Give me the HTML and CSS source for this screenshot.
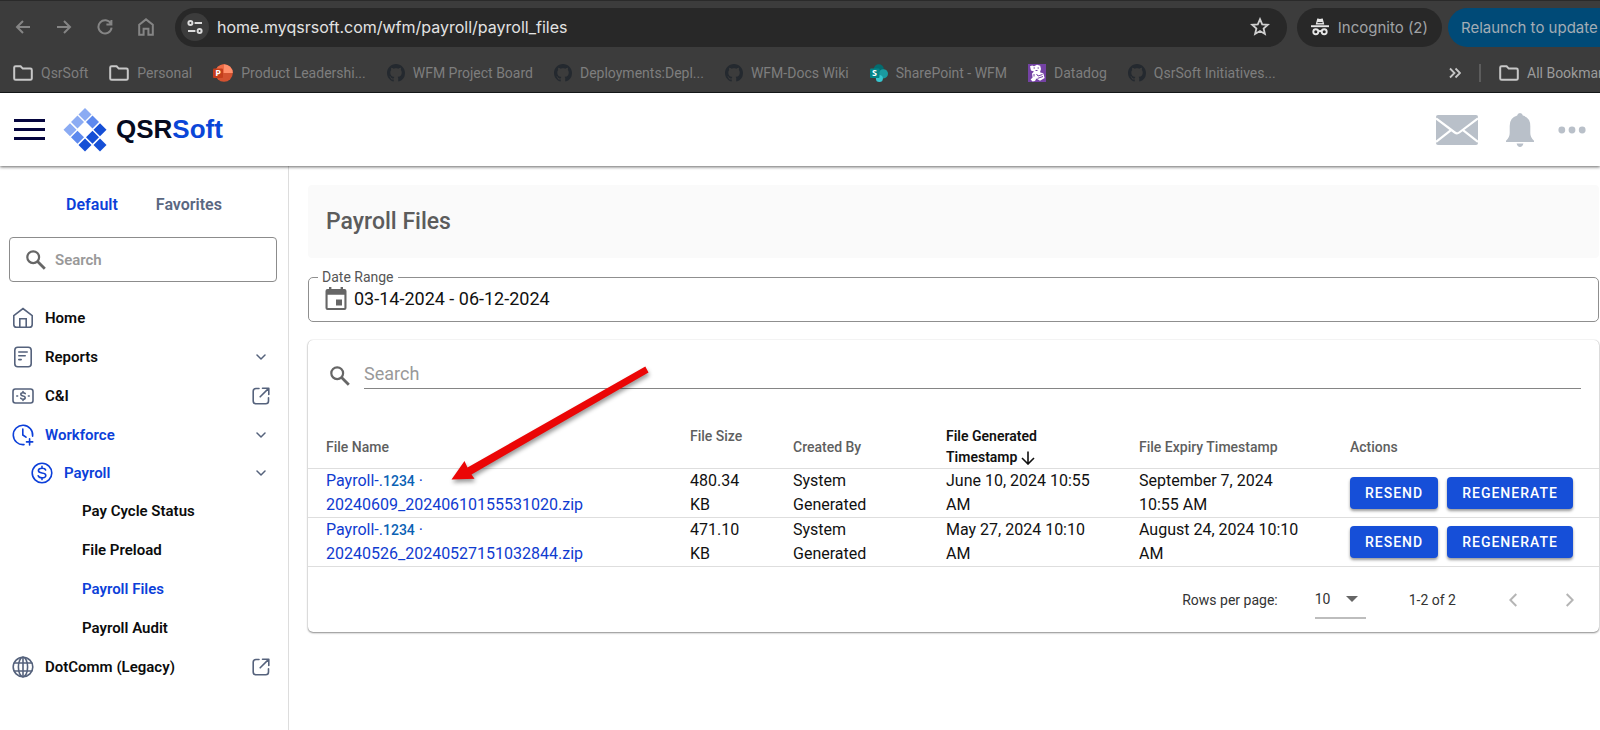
FILE: index.html
```html
<!DOCTYPE html>
<html lang="en">
<head>
<meta charset="utf-8">
<title>Payroll Files</title>
<link rel="stylesheet" href="styles.css">
</head>
<body>
<svg class="defs" aria-hidden="true">
  <symbol id="i-folder" viewBox="0 0 20 16"><path d="M1.2 2.6Q1.2 1.2 2.6 1.2H7.6L9.8 3.6H17.4Q18.8 3.6 18.8 5V13.4Q18.8 14.8 17.4 14.8H2.6Q1.2 14.8 1.2 13.4Z" fill="none" stroke="#c7c7c7" stroke-width="2"/></symbol>
  <symbol id="i-github" viewBox="0 0 16 16"><path fill="#24292f" d="M8 0C3.58 0 0 3.58 0 8c0 3.54 2.29 6.53 5.47 7.59.4.07.55-.17.55-.38 0-.19-.01-.82-.01-1.49-2.01.37-2.53-.49-2.69-.94-.09-.23-.48-.94-.82-1.13-.28-.15-.68-.52-.01-.53.63-.01 1.08.58 1.23.82.72 1.21 1.87.87 2.33.66.07-.52.28-.87.51-1.07-1.78-.2-3.64-.89-3.64-3.95 0-.87.31-1.59.82-2.15-.08-.2-.36-1.02.08-2.12 0 0 .67-.21 2.2.82.64-.18 1.32-.27 2-.27.68 0 1.36.09 2 .27 1.53-1.04 2.2-.82 2.2-.82.44 1.1.16 1.92.08 2.12.51.56.82 1.27.82 2.15 0 3.07-1.87 3.75-3.65 3.95.29.25.54.73.54 1.48 0 1.07-.01 1.93-.01 2.2 0 .21.15.46.55.38A8.013 8.013 0 0016 8c0-4.42-3.58-8-8-8z"/></symbol>
  <symbol id="i-search" viewBox="0 0 20 20"><circle cx="7.2" cy="7.2" r="5.9" fill="none" stroke="currentColor" stroke-width="2.2"/><path d="M11.6 11.6L18.8 18.8" stroke="currentColor" stroke-width="2.8"/></symbol>
  <symbol id="i-down" viewBox="0 0 10 6"><path d="M1 1L5 5L9 1" fill="none" stroke="currentColor" stroke-width="1.5" stroke-linecap="round" stroke-linejoin="round"/></symbol>
  <symbol id="i-external" viewBox="0 0 18 18"><path d="M7 1.5H4Q1.2 1.5 1.2 4.3V14Q1.2 16.8 4 16.8H13.7Q16.5 16.8 16.5 14V10.8M10.5 1.2H16.8V7.5M16.6 1.4L8.2 9.8" fill="none" stroke="currentColor" stroke-width="1.6" stroke-linecap="round" stroke-linejoin="round"/></symbol>
</svg>

<div class="browser">
  <div class="toolbar">
    <div class="nav-buttons">
      <button type="button" aria-label="Back"><svg width="16" height="14" viewBox="0 0 16 14"><path d="M15 7H2M8 1L2 7L8 13" /></svg></button>
      <button type="button" aria-label="Forward"><svg width="16" height="14" viewBox="0 0 16 14"><path d="M1 7H14M8 1L14 7L8 13" /></svg></button>
      <button type="button" aria-label="Reload"><svg width="16" height="16" viewBox="0 0 16 16"><path d="M13.8 4.6A6.6 6.6 0 1 0 14.6 8.6M14.4 1V5.6H9.4" /></svg></button>
      <button type="button" aria-label="Home page"><svg width="16" height="18" viewBox="0 0 16 18"><path d="M1.2 6.8L8 1.4L14.8 6.8V16.8H10.4V10.8H5.6V16.8H1.2Z" /></svg></button>
    </div>
    <div class="address">
      <span class="site-info"><svg width="16" height="14" viewBox="0 0 16 14"><g fill="none" stroke="#dcdcdc" stroke-width="2"><circle cx="3.4" cy="3" r="2"/><path d="M7.6 3H15M1 11H8.4"/><circle cx="12.6" cy="11" r="2"/></g></svg></span>
      <input class="url" type="text" aria-label="Address" value="home.myqsrsoft.com/wfm/payroll/payroll_files" readonly>
      <svg width="20" height="20" viewBox="0 0 20 20"><path d="M10 2.2L12.2 7.4L17.8 7.8L13.6 11.5L14.9 17L10 14.1L5.1 17L6.4 11.5L2.2 7.8L7.8 7.4Z" fill="none" stroke="#d0d0d0" stroke-width="1.8"/></svg>
    </div>
    <button type="button" class="incognito"><svg width="18" height="18" viewBox="0 0 18 18"><path fill="#e6e6e6" d="M6.3.5Q7 .2 9 .9Q11 .2 11.7.5L13.3 6.6H4.7Z"/><path d="M0 8.2H18" stroke="#e6e6e6" stroke-width="1.9"/><path d="M6.5 4.6H11.5" stroke="#282828" stroke-width="1"/><g fill="none" stroke="#e6e6e6" stroke-width="1.9"><circle cx="4.8" cy="13.8" r="2.5"/><circle cx="13.2" cy="13.8" r="2.5"/><path d="M7.2 13.4Q9 12.5 10.8 13.4"/></g></svg>Incognito (2)</button>
    <button type="button" class="relaunch">Relaunch to update</button>
  </div>
  <nav class="bookmarks" aria-label="Bookmarks">
    <a href="#"><svg width="20" height="16"><use href="#i-folder"/></svg>QsrSoft</a>
    <a href="#"><svg width="20" height="16"><use href="#i-folder"/></svg>Personal</a>
    <a href="#"><svg width="20" height="18" viewBox="0 0 20 18"><circle cx="11" cy="9" r="8.8" fill="#d35230"/><path d="M11 .2A8.8 8.8 0 0 1 19.8 9H11Z" fill="#ff8f6b"/><path d="M11 .2A8.8 8.8 0 0 0 2.2 9H11Z" fill="#ed6c47"/><rect y="4.5" width="10" height="9.5" rx="1" fill="#c43e1c"/><text x="2.2" y="12.4" class="tile-letter">P</text></svg>Product Leadershi...</a>
    <a href="#"><svg width="18" height="18"><use href="#i-github"/></svg>WFM Project Board</a>
    <a href="#"><svg width="18" height="18"><use href="#i-github"/></svg>Deployments:Depl...</a>
    <a href="#"><svg width="18" height="18"><use href="#i-github"/></svg>WFM-Docs Wiki</a>
    <a href="#"><svg width="18" height="18" viewBox="0 0 18 18"><circle cx="8.8" cy="5.2" r="5" fill="#036c70"/><circle cx="13.4" cy="9.8" r="4.6" fill="#1a9ba1"/><circle cx="9.4" cy="14.4" r="3.5" fill="#37c6d0"/><rect y="4.5" width="9.5" height="9.5" rx="1" fill="#038387"/><text x="2" y="12.4" class="tile-letter">S</text></svg>SharePoint - WFM</a>
    <a href="#"><svg width="18" height="18" viewBox="0 0 18 18"><rect width="18" height="18" fill="#7442a4"/><path fill="#fff" d="M2 2.2L4.2 1.4L6 2.2L9 .8L12.2 1.8L13 5L12 8.2L15.4 9.6L16.6 14L12 16.8L8.4 14.6L7 17L4.6 17.4L2.6 15.4L4.6 13.4L4 9.4L6 7.4L3 6.4Z"/><path d="M5.5 4H7M9.5 4H11M7.5 6.5H9.5M8.5 10L10 12L14.5 10.5M9.5 14.4L15 12.5M6 10V12.5" stroke="#7442a4" stroke-width="1" fill="none"/></svg>Datadog</a>
    <a href="#"><svg width="18" height="18"><use href="#i-github"/></svg>QsrSoft Initiatives...</a>
    <div class="bookmarks-end">
      <button type="button" aria-label="More bookmarks"><svg width="12" height="12" viewBox="0 0 12 12"><path d="M1 1.5L5.5 6L1 10.5M6.5 1.5L11 6L6.5 10.5" fill="none" stroke="#c7c7c7" stroke-width="1.8"/></svg></button>
      <span class="divider"></span>
      <a class="all" href="#"><svg width="20" height="16"><use href="#i-folder"/></svg>All Bookmarks</a>
    </div>
  </nav>
</div>

<header class="app-header">
  <button type="button" class="menu" aria-label="Menu"><span></span><span></span><span></span></button>
  <a class="brand" href="#">
    <svg width="44" height="44" viewBox="0 0 44 44">
      <g fill="#8babf3"><path d="M22 0L28.5 6.5L22 13L15.5 6.5Z"/><path d="M14.5 7.6L21 14.1L14.5 20.6L8 14.1Z"/><path d="M7 15.2L13.5 21.7L7 28.2L.5 21.7Z"/></g>
      <g fill="#5d89ee"><path d="M29.5 7.6L36 14.1L29.5 20.6L23 14.1Z"/><path d="M14.5 22.8L21 29.3L14.5 35.8L8 29.3Z"/></g>
      <g fill="#154fd6"><path d="M37 15.2L43.5 21.7L37 28.2L30.5 21.7Z"/><path d="M29.5 22.8L36 29.3L29.5 35.8L23 29.3Z"/><path d="M22 30.4L28.5 36.9L22 43.4L15.5 36.9Z"/><path d="M37 30.4L43.5 36.9L37 43.4L30.5 36.9Z"/></g>
    </svg>
    <span class="brand-name">QSR<span>Soft</span></span>
  </a>
  <div class="header-actions">
    <button type="button" aria-label="Messages"><svg width="42" height="30" viewBox="0 0 42 30"><rect x="0" y="0" width="42" height="30" rx="2" fill="#b9c0c9"/><path d="M0 3.5L18.8 17.5Q21 19.2 23.2 17.5L42 3.5M0 27L15 15.2M42 27L27 15.2" fill="none" stroke="#fff" stroke-width="2.2"/></svg></button>
    <button type="button" aria-label="Notifications"><svg width="28" height="34" viewBox="0 0 28 34"><path fill="#b9c0c9" d="M14 0Q16.5 0 16.8 2.6Q24.3 4.6 24.3 13V20Q24.3 24.5 28 27.8V29H0V27.8Q3.7 24.5 3.7 20V13Q3.7 4.6 11.2 2.6Q11.5 0 14 0ZM10.6 30.6H17.4Q16.6 34 14 34Q11.4 34 10.6 30.6Z"/></svg></button>
    <button type="button" aria-label="More"><svg width="28" height="8" viewBox="0 0 28 8"><g fill="#b9c0c9"><circle cx="3.8" cy="4" r="3.4"/><circle cx="14" cy="4" r="3.4"/><circle cx="24.2" cy="4" r="3.4"/></g></svg></button>
  </div>
</header>

<div class="layout">
  <aside class="sidebar">
    <div class="tabs"><button type="button" class="active">Default</button><button type="button">Favorites</button></div>
    <label class="side-search"><svg width="20" height="20"><use href="#i-search"/></svg><input type="text" placeholder="Search" aria-label="Search menu"></label>
    <ul class="menu-list">
      <li><a href="#"><svg width="22" height="22" viewBox="0 0 22 22"><path d="M1.8 8.6L11 1.6L20.2 8.6V17.4Q20.2 20.2 17.4 20.2H4.6Q1.8 20.2 1.8 17.4ZM7.8 20V11.8H14.2V20"/></svg>Home</a></li>
      <li><a href="#"><svg width="22" height="22" viewBox="0 0 22 22"><rect x="2.8" y="1.2" width="16.4" height="19.6" rx="3"/><path d="M6.8 6H15.2M6.8 9.8H13.2M6.8 13.6H9.2"/></svg>Reports<svg class="end-down" width="10" height="6"><use href="#i-down"/></svg></a></li>
      <li><a href="#"><svg width="22" height="22" viewBox="0 0 22 22"><rect x="1" y="4" width="20" height="14" rx="2.4"/><path d="M13.2 8.6Q12.6 7.8 11 7.8Q8.8 7.8 8.8 9.3Q8.8 10.7 11 11Q13.2 11.3 13.2 12.7Q13.2 14.2 11 14.2Q9.2 14.2 8.7 13.2M11 6.6V7.8M11 14.2V15.4M4.8 11H5.6M16.4 11H17.2"/></svg>C&amp;I<svg class="end-ext" width="18" height="18"><use href="#i-external"/></svg></a></li>
      <li><a href="#" class="on"><svg width="22" height="22" viewBox="0 0 22 22"><path d="M20.6 12.2A9.7 9.7 0 1 0 12 20.6M10.8 5V11L14 13.2M17.6 14.8V21M14.5 17.9H20.7"/></svg>Workforce<svg class="end-down" width="10" height="6"><use href="#i-down"/></svg></a>
        <ul>
          <li><a href="#" class="on level-2"><svg width="22" height="22" viewBox="0 0 22 22"><circle cx="11" cy="11" r="9.8"/><path d="M14.6 8Q14 6.2 11 6.2Q7.4 6.2 7.4 8.6Q7.4 10.6 11 11Q14.8 11.4 14.8 13.5Q14.8 15.8 11 15.8Q7.8 15.8 7.2 13.8M11 4.4V6.2M11 15.8V17.6"/></svg>Payroll<svg class="end-down" width="10" height="6"><use href="#i-down"/></svg></a>
            <ul class="pages-list">
              <li><a href="#" class="level-3">Pay Cycle Status</a></li>
              <li><a href="#" class="level-3">File Preload</a></li>
              <li><a href="#" class="on level-3">Payroll Files</a></li>
              <li><a href="#" class="level-3">Payroll Audit</a></li>
            </ul>
          </li>
        </ul>
      </li>
      <li><a href="#"><svg width="22" height="22" viewBox="0 0 22 22"><circle cx="11" cy="11" r="9.8"/><ellipse cx="11" cy="11" rx="4.6" ry="9.8"/><path d="M11 1.2V20.8M2.4 7H19.6M2.4 15H19.6"/></svg>DotComm (Legacy)<svg class="end-ext" width="18" height="18"><use href="#i-external"/></svg></a></li>
    </ul>
  </aside>

  <main class="content">
    <h1 class="page-title">Payroll Files</h1>
    <fieldset class="date-range">
      <legend><label for="range">Date Range</label></legend>
      <svg width="22" height="24" viewBox="0 0 22 24"><path fill="#666" fill-rule="evenodd" d="M4 0H6.4V2H15.6V0H18V2H19.5Q21.5 2 21.5 4V21Q21.5 23 19.5 23H2.5Q.5 23 .5 21V4Q.5 2 2.5 2H4ZM2.6 7.8V21H19.4V7.8ZM11 12.5H17V18.5H11Z"/></svg>
      <input id="range" type="text" value="03-14-2024 - 06-12-2024">
    </fieldset>

    <section class="card">
      <div class="table-search"><svg width="20" height="20"><use href="#i-search"/></svg><input type="text" placeholder="Search" aria-label="Search files"></div>
      <table>
        <colgroup><col><col class="c-size"><col class="c-by"><col class="c-made"><col class="c-expiry"><col class="c-actions"></colgroup>
        <thead>
          <tr><th>File Name</th><th class="top">File Size</th><th>Created By</th><th class="sorted">File Generated Timestamp <svg width="14" height="14" viewBox="0 0 14 14"><path d="M7 .5V13M1 7L7 13L13 7" fill="none" stroke="#111" stroke-width="1.6"/></svg></th><th>File Expiry Timestamp</th><th>Actions</th></tr>
        </thead>
        <tbody>
          <tr>
            <td><a href="#">Payroll-.<span class="store">1234</span> ·<br>20240609_20240610155531020.zip</a></td><td>480.34 KB</td><td>System Generated</td><td>June 10, 2024 10:55 AM</td><td>September 7, 2024 10:55 AM</td>
            <td class="actions"><div><button type="button">RESEND</button><button type="button">REGENERATE</button></div></td>
          </tr>
          <tr>
            <td><a href="#">Payroll-.<span class="store">1234</span> ·<br>20240526_20240527151032844.zip</a></td><td>471.10 KB</td><td>System Generated</td><td>May 27, 2024 10:10 AM</td><td>August 24, 2024 10:10 AM</td>
            <td class="actions"><div><button type="button">RESEND</button><button type="button">REGENERATE</button></div></td>
          </tr>
        </tbody>
      </table>
      <div class="pager">
        <label for="rows">Rows per page:</label>
        <div class="rows-select"><select id="rows"><option>10</option></select><svg width="12" height="6" viewBox="0 0 12 6"><path d="M0 0H12L6 6Z" fill="#666"/></svg></div>
        <span>1-2 of 2</span>
        <div class="pages">
          <button type="button" aria-label="Previous page"><svg width="8" height="14" viewBox="0 0 8 14"><path d="M7.3 1L1.3 7L7.3 13" fill="none" stroke="#b5b5b5" stroke-width="2"/></svg></button>
          <button type="button" aria-label="Next page"><svg width="8" height="14" viewBox="0 0 8 14"><path d="M.7 1L6.7 7L.7 13" fill="none" stroke="#b5b5b5" stroke-width="2"/></svg></button>
        </div>
      </div>
      <svg class="pointer" width="220" height="130" viewBox="0 0 220 130"><path d="M3.5 119.5L16.5 101L19.5 107.5L197.3 6.5L200.5 12.5L23.5 114.5L26.5 118.8Z" fill="#eb0606"/></svg>
    </section>
  </main>
</div>
</body>
</html>
```
FILE: styles.css
```css
* { box-sizing: border-box; }
body { margin: 0; min-height: 100vh; display: flex; flex-direction: column; overflow-x: hidden; background: #fff; color: #111; font-family: Roboto, "Liberation Sans", sans-serif; font-size: 16px; }
button, input, select { font: inherit; color: inherit; border: 0; background: none; padding: 0; margin: 0; outline: 0; border-radius: 0; }
button { cursor: pointer; }
a { color: inherit; text-decoration: none; }
ul { list-style: none; margin: 0; padding: 0; }
svg { display: block; flex: none; }
.defs { position: absolute; width: 0; height: 0; }

/* Browser frame */
.browser { background: #3c3c3c; border-top: 1px solid #2a2a2a; border-bottom: 1px solid #161a1b; font-family: Inter, "Liberation Sans", sans-serif; overflow: hidden; }
.toolbar { display: flex; align-items: center; padding: 6px 0 0 15px; height: 46px; }
.nav-buttons { display: flex; gap: 25px; width: 160px; flex: none; }
.nav-buttons button { display: flex; align-items: center; }
.nav-buttons path { fill: none; stroke: #858585; stroke-width: 2; }
.address { flex: 1; height: 39px; display: flex; align-items: center; gap: 8px; padding: 0 17px 0 6px; border-radius: 20px; background: #282828; }
.site-info { width: 28px; height: 28px; border-radius: 50%; background: #3c3c3c; display: flex; align-items: center; justify-content: center; }
.url { flex: 1; min-width: 0; color: #e3e3e3; font-size: 16px; }
.incognito { flex: none; height: 39px; margin-left: 10px; padding: 0 14px; border-radius: 20px; background: #282828; color: #a0a3a6; font-size: 15px; display: flex; align-items: center; gap: 9px; }
.relaunch { flex: none; width: 172px; height: 39px; margin: 0 -20px 0 6px; padding-left: 13px; border-radius: 20px; background: #004a77; color: #a3adb5; font-size: 15px; text-align: left; white-space: nowrap; }
.bookmarks { display: flex; align-items: center; gap: 21px; height: 45px; padding: 6px 0 0 13px; color: #7e7e7e; font-family: Roboto, "Liberation Sans", sans-serif; font-size: 14px; white-space: nowrap; }
.bookmarks a { display: flex; align-items: center; gap: 8px; }
.bookmarks-end { margin-left: auto; display: flex; align-items: center; gap: 18px; }
.divider { width: 2px; height: 18px; background: #5c5c5c; }
.bookmarks .all { width: 101px; overflow: hidden; color: #9b9b9b; }
.tile-letter { font: bold 9px "Open Sans", sans-serif; fill: #fff; }

/* Application header */
.app-header { height: 73px; display: flex; align-items: center; padding: 0 14px; background: #fff; box-shadow: 0 1px 3px rgba(0, 0, 0, .6); position: relative; z-index: 1; }
.menu { width: 31px; display: flex; flex-direction: column; gap: 6px; }
.menu span { height: 3px; background: #05053f; }
.brand { display: flex; align-items: center; gap: 9px; margin-left: 18px; }
.brand-name { color: #060a1e; font: bold 26px "Liberation Sans", sans-serif; }
.brand-name span { color: #0b46d8; }
.header-actions { margin-left: auto; display: flex; align-items: center; gap: 26px; }
.header-actions button:last-child { margin-left: -2px; }
.header-actions button:first-child { margin-right: 2px; }

/* Sidebar */
.layout { flex: 1; display: flex; }
.sidebar { width: 289px; flex: none; padding: 20px 11px 0 9px; border-right: 1px solid #ddd; font-size: 15px; font-weight: 600; }
.tabs { display: flex; justify-content: center; gap: 38px; height: 36px; padding-left: 2px; align-items: center; color: #5a6781; font-size: 16px; }
.tabs .active { color: #0c3fd9; }
.side-search { display: flex; align-items: center; gap: 9px; height: 45px; margin: 15px 0 17px; padding: 0 16px; border: 1px solid #8c8c8c; border-radius: 4px; color: #666; }
.side-search input { flex: 1; min-width: 0; }
.side-search input::placeholder { color: #999; opacity: 1; }
.menu-list, .pages-list { display: flex; flex-direction: column; gap: 1px; }
.menu-list { color: #0c0c0c; }
.menu-list a { height: 38px; display: flex; align-items: center; gap: 11px; padding: 0 7px 0 3px; }
.menu-list svg { color: #55627c; fill: none; stroke: #55627c; stroke-width: 1.6; stroke-linecap: round; }
.menu-list .on { color: #0c3fd9; }
.menu-list .on > svg:first-child { stroke: #0c3fd9; }
.menu-list .end-down { margin: 0 4px 0 auto; stroke: none; }
.menu-list .end-ext { margin-left: auto; stroke: none; }
.menu-list .level-2 { padding-left: 22px; }
.menu-list .level-3 { padding-left: 73px; }

/* Content */
.content { flex: 1; min-width: 0; padding: 19px 1px 0 19px; }
.page-title { margin: 0 0 12px; padding: 23px 18px 22px; line-height: 28px; border-radius: 4px; background: #fafafa; color: #5c5c5c; font-size: 23px; font-weight: 500; }
.date-range { display: flex; align-items: center; gap: 7px; margin: 0 0 18px; padding: 2px 16px 10px; min-width: 0; border: 1px solid #8f8f8f; border-radius: 5px; }
.date-range legend { margin-left: -7px; padding: 0 4px; font-size: 14px; line-height: 15px; color: #555; }
.date-range input { flex: 1; min-width: 0; font-size: 18px; line-height: 24px; height: 24px; }
.card { position: relative; border-radius: 5px; box-shadow: 0 1px 2px rgba(0, 0, 0, .45), 0 0 1px rgba(0, 0, 0, .25); }
.table-search { display: flex; align-items: center; gap: 14px; padding: 19px 18px 32px 22px; color: #666; }
.table-search svg { margin-top: 4px; }
.table-search input { flex: 1; min-width: 0; height: 30px; border-bottom: 1px solid #858585; font-size: 18px; }
.table-search input::placeholder { color: #999; opacity: 1; }
table { width: 100%; table-layout: fixed; border-collapse: collapse; }
.c-size { width: 103px; }
.c-by { width: 153px; }
.c-made { width: 193px; }
.c-expiry { width: 211px; }
.c-actions { width: 267px; }
th { height: 47px; padding: 5px 18px 0; text-align: left; color: #5f5f5f; font-size: 14px; font-weight: 500; line-height: 21px; }
th.top { vertical-align: top; }
th svg { display: inline-block; vertical-align: -3px; }
th.sorted { color: #111; font-weight: 600; padding-right: 40px; }
td { padding: 0 20px 0 18px; line-height: 24px; }
tr { border-bottom: 1px solid #dedede; }
td a { color: #0f3bd0; }
.store { color: #0b62b4; font-size: 14px; font-weight: 500; }
td.actions { padding-right: 0; }
.actions div { display: flex; gap: 9px; }
.actions button { height: 32px; padding: 0 15px; border-radius: 4px; background: #164fd8; color: #fff; font-size: 14px; font-weight: 500; letter-spacing: 1px; box-shadow: 0 2px 3px rgba(0, 0, 0, .4); }
.pager { display: flex; align-items: center; justify-content: flex-end; height: 65px; padding-right: 25px; font-size: 14px; color: #333; }
.rows-select { display: flex; align-items: center; justify-content: space-between; width: 51px; height: 38px; margin: 0 43px 0 37px; border-bottom: 2px solid #bdbdbd; padding-right: 8px; }
.rows-select select { appearance: none; width: 30px; }
.pages { display: flex; gap: 49px; margin-left: 53px; }
.pointer { position: absolute; left: 140px; top: 20px; filter: drop-shadow(1px 3px 2px rgba(0, 0, 0, .4)); pointer-events: none; }
```
